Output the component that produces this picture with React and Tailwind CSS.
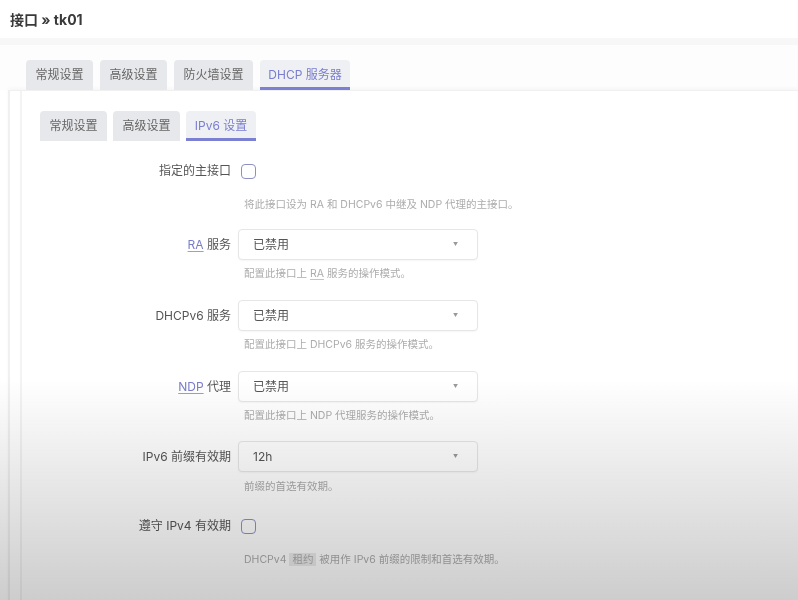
import React from "react";

const font = "font-['Inter','Noto_Sans_CJK_SC',sans-serif]";

function Tab({ children, active, w }) {
  return (
    <div
      className={`h-[30px] flex items-center justify-center rounded-t-[4px] text-[12px] ${
        active
          ? "bg-[#eef0f3] text-[#7a7ed0] border-b-[3px] border-[#7c80d2] pt-[3px]"
          : "bg-[#e7e8eb] text-[#666]"
      }`}
      style={{ width: w }}
    >
      {children}
    </div>
  );
}

function Abbr({ children }) {
  return (
    <span className="text-[#7a7ec9] underline decoration-[#9a9dd6] underline-offset-2">
      {children}
    </span>
  );
}

function Checkbox() {
  return (
    <div className="ml-[3px] w-[15px] h-[15px] rounded-[4px] border-[1.5px] border-[#8e90c4] bg-white" />
  );
}

function Select({ value }) {
  return (
    <div className="w-[240px] h-[31px] rounded-[4px] border border-[#e6e6e6] bg-white shadow-[0_1px_2px_rgba(0,0,0,0.04)] flex items-center justify-between pl-[14px] pr-[19px] text-[12px] text-[#555]">
      <span>{value}</span>
      <span className="text-[5px] text-[#999]">▼</span>
    </div>
  );
}

function Row({ label, children, className = "" }) {
  return (
    <div className={`flex items-center ${className}`}>
      <div className="w-[209px] text-right text-[12px] text-[#555] leading-[16px]">{label}</div>
      <div className="ml-[7px] flex items-center">{children}</div>
    </div>
  );
}

function Desc({ children, className = "" }) {
  return (
    <div className={`ml-[222px] text-[10.5px] leading-[16px] text-[#acacac] ${className}`}>
      {children}
    </div>
  );
}

export default function App() {
  return (
    <div className={`relative w-[798px] h-[600px] overflow-hidden bg-white ${font}`}>
      <div className="h-[38px] flex items-center px-[10px] text-[14px] font-bold text-[#3a3a3a]">
        接口 » tk01
      </div>
      <div className="h-[7px] bg-[#f7f7f7]" />
      <div className="pt-[15px] pl-[26px] flex gap-[7px] bg-[#fdfdfd]">
        <Tab w={67}>常规设置</Tab>
        <Tab w={67}>高级设置</Tab>
        <Tab w={79}>防火墙设置</Tab>
        <Tab w={90} active>DHCP 服务器</Tab>
      </div>
      <div className="ml-[8px] border-l-[2px] border-t border-[#f0f0f0] bg-white h-[520px] shadow-[0_-2px_4px_rgba(0,0,0,0.03)]">
        <div className="ml-[10px] border-l-[2px] border-[#f3f3f3] h-full pt-[20px]">
          <div className="pl-[18px] flex gap-[6px]">
            <Tab w={67}>常规设置</Tab>
            <Tab w={67}>高级设置</Tab>
            <Tab w={70} active>IPv6 设置</Tab>
          </div>

          <Row label="指定的主接口" className="mt-[20px] h-[20px]">
            <Checkbox />
          </Row>
          <Desc className="mt-[16px]">将此接口设为 RA 和 DHCPv6 中继及 NDP 代理的主接口。</Desc>

          <Row label={<><Abbr>RA</Abbr> 服务</>} className="mt-[16px]">
            <Select value="已禁用" />
          </Row>
          <Desc className="mt-[6px]">
            配置此接口上 <span className="underline decoration-[#c4c4c4] underline-offset-2">RA</span> 服务的操作模式。
          </Desc>

          <Row label="DHCPv6 服务" className="mt-[18px]">
            <Select value="已禁用" />
          </Row>
          <Desc className="mt-[6px]">配置此接口上 DHCPv6 服务的操作模式。</Desc>

          <Row label={<><Abbr>NDP</Abbr> 代理</>} className="mt-[18px]">
            <Select value="已禁用" />
          </Row>
          <Desc className="mt-[6px]">配置此接口上 NDP 代理服务的操作模式。</Desc>

          <Row label="IPv6 前缀有效期" className="mt-[17px]">
            <Select value="12h" />
          </Row>
          <Desc className="mt-[7px]">前缀的首选有效期。</Desc>

          <Row label="遵守 IPv4 有效期" className="mt-[21px] h-[20px]">
            <Checkbox />
          </Row>
          <Desc className="mt-[16px]">
            DHCPv4 <span className="bg-[#ececec] px-[3px]">租约</span> 被用作 IPv6 前缀的限制和首选有效期。
          </Desc>
        </div>
      </div>
      <div className="pointer-events-none absolute inset-x-0 top-[380px] bottom-0 bg-linear-to-b from-white to-[#cdcdcd] mix-blend-multiply" />
    </div>
  );
}
